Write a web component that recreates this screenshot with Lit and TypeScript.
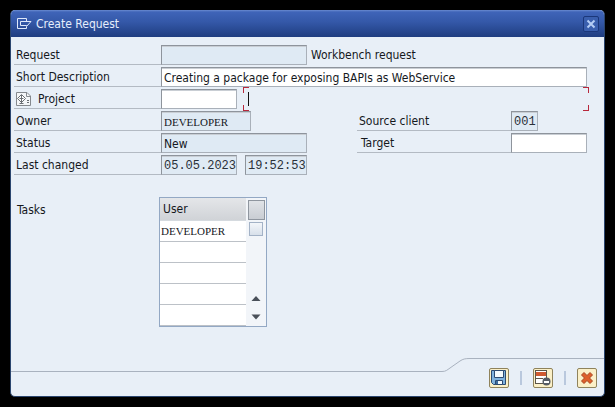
import { LitElement, html, css } from "lit";
import { customElement } from "lit/decorators.js";

const variantIcon = html`<svg class="proj" width="16" height="14" viewBox="0 0 16 14" aria-hidden="true">
  <path d="M.5 .5H11L14.500 4V13.500H.5Z" fill="#f4f6f8" stroke="#85898e"/>
  <path d="M10.500 .5V4.500H14.500" fill="none" stroke="#85898e"/>
  <path d="M5.500 2.500L9.500 6.500L5.500 10.500L1.500 6.500Z" fill="#fff" stroke="#6a6e73"/>
  <path d="M5.500 3V12M3.500 6.500H7.500M3.500 11.500H7.500M11 8.500H13M11 10.500H13" fill="none" stroke="#6a6e73"/>
</svg>`;

const dialogIcon = html`<svg width="15" height="12" viewBox="0 0 15 12" aria-hidden="true">
  <path d="M9.500 3V.5H.5V10.500H9.500V9" fill="none" stroke="#dfe8fa"/>
  <path d="M3.500 3.500H14L9.500 8.500V7.500H3.500Z" fill="none" stroke="#dfe8fa"/>
</svg>`;

const saveIcon = html`<svg width="18" height="18" viewBox="0 0 18 18" aria-hidden="true">
  <path d="M1.500 1.500H15.500V15.500H3.500L1.500 13.500Z" fill="#7fb2de" stroke="#2c4a70"/>
  <path d="M4.500 1.500H13.500V8.500H4.500Z" fill="#f4fafd" stroke="#2c4a70"/>
  <path d="M5.500 15.500V11.500H12.500V15.500Z" fill="#f4fafd" stroke="#2c4a70"/>
  <path d="M6 12H8V15H6Z" fill="#3d6c9e"/>
</svg>`;

const removeIcon = html`<svg width="18" height="18" viewBox="0 0 18 18" aria-hidden="true">
  <path d="M1 1H13V15H1Z" fill="#fff"/>
  <path d="M1 1.500H13M1.500 1V15M1 9.500H9M1 14.500H9M12.500 1V9" fill="none" stroke="#5c5648"/>
  <path d="M2 3H12V7H2Z" fill="#cf5a30"/>
  <circle cx="12.500" cy="12.500" r="4" fill="#565c65"/>
  <path d="M10 12H15V14H10Z" fill="#fff"/>
</svg>`;

const cancelIcon = html`<svg width="18" height="18" viewBox="0 0 18 18" aria-hidden="true">
  <path d="M3.500 6L6 3.500L9 6.500L12 3.500L14.500 6L11.500 9L14.500 12L12 14.500L9 11.500L6 14.500L3.500 12L6.500 9Z"
    fill="#de5f2a" stroke="#a84420"/>
</svg>`;

@customElement("app-root")
export class AppRoot extends LitElement {
  static styles = css`
    * { box-sizing: border-box; }
    :host {
      display: flex;
      min-height: 100vh;
      padding: 10px;
      box-sizing: border-box;
      background: #000;
      color: #15181d;
      font: 12px/20px "DejaVu Sans Condensed", "Noto Sans", sans-serif;
    }
    .dialog {
      flex: 1;
      display: flex;
      flex-direction: column;
      border: 1px solid #2b466f;
      border-top: 0;
      border-radius: 5px;
      overflow: hidden;
      background: #e8eff7;
    }
    .title {
      display: flex;
      align-items: center;
      gap: 4px;
      height: 27px;
      padding: 0 5px 0 6px;
      color: #e6eefc;
      background: linear-gradient(#6a8bd0 0, #3f64b8 2px, #3458a8 12px, #1f3d80 100%);
    }
    h1 { flex: 1; margin: 0; font: inherit; }
    button { padding: 0; font: inherit; }
    .close {
      display: grid;
      place-items: center;
      width: 16px;
      height: 16px;
      border: 1px solid #1b377a;
      border-radius: 2px;
      background: #3a5fae;
    }
    form { flex: 1; padding: 8px 17px 12px 3px; }
    .rows { display: grid; gap: 2px; }
    .row { display: flex; height: 20px; }
    .label {
      display: flex;
      align-items: center;
      gap: 6px;
      flex: none;
      width: 147px;
      padding-left: 2px;
      border-bottom: 1px solid #b3bac3;
      white-space: nowrap;
    }
    .proj { flex: none; }
    input {
      min-width: 0;
      height: 20px;
      margin: 0;
      padding: 1px 0 0 2px;
      border: 1px solid #a9b0b9;
      border-top-color: #8e949c;
      border-left-color: #8e949c;
      border-radius: 0;
      outline: 0;
      color: inherit;
      background: #fff;
      box-shadow: inset 0 1px 0 #c9ced4;
      font: inherit;
    }
    input:read-only { background: #dfeaf4; }
    .mono { font-family: "Liberation Mono", monospace; color: #2a3038; }
    .name { font: 11px/20px "Liberation Serif", serif; }
    .w146 { width: 146px; }
    .w90 { width: 90px; }
    .w76 { width: 76px; }
    .w62 { width: 62px; }
    .w27 { width: 27px; }
    .fill { flex: 1; }
    .hint { padding-left: 4px; }
    .gap { margin-left: 8px; }
    .right { display: flex; width: 230px; margin-left: auto; }
    .right .label { width: 154px; }
    .right .indent { padding-left: 4px; }
    .focus {
      --r: linear-gradient(#b8283c, #b8283c);
      flex: 1;
      display: flex;
      align-items: center;
      height: 24px;
      margin: -2px -2px 0 6px;
      padding-left: 5px;
      background:
        var(--r) 0 0 / 6px 1px, var(--r) 0 0 / 1px 6px,
        var(--r) 100% 0 / 6px 1px, var(--r) 100% 0 / 1px 6px,
        var(--r) 0 100% / 6px 1px, var(--r) 0 100% / 1px 6px,
        var(--r) 100% 100% / 6px 1px, var(--r) 100% 100% / 1px 6px;
      background-repeat: no-repeat;
    }
    .caret { width: 1px; height: 14px; background: #111; }
    .tasks { display: flex; margin-top: 22px; }
    .tasks h2 { width: 145px; margin: 0; padding: 3px 0 0 3px; font: inherit; }
    .list { display: flex; border: 1px solid #93a8c4; background: #fff; }
    table { width: 86px; border-collapse: separate; border-spacing: 0; table-layout: fixed; }
    th, td {
      height: 21px;
      padding: 0 0 0 2px;
      border-bottom: 1px solid #bcc1c7;
      text-align: left;
      font-weight: normal;
      white-space: nowrap;
    }
    td { padding-left: 1px; }
    th { height: 23px; border-color: #d5dadf; background: linear-gradient(#e4e6e9, #d0d3d7); padding-left: 3px; }
    .scroll { display: flex; flex-direction: column; align-items: center; width: 20px; background: #f2f5f9; }
    .cfg { width: 17px; height: 20px; margin-top: 2px; border: 1px solid #8f969f; background: linear-gradient(#e0e3e7, #c9cdd3); }
    .thumb { width: 14px; height: 14px; margin-top: 2px; border: 1px solid #a3b2c6; background: linear-gradient(#f3f6fa, #d8e0ea); }
    .arrow { width: 14px; height: 18px; border: 0; background: none; line-height: 0; }
    .up { margin-top: auto; }
    footer { display: flex; height: 38px; }
    .line { flex: 1; margin-top: 13px; border-top: 1px solid #a9b2bf; }
    .actions {
      display: flex;
      align-items: center;
      justify-content: flex-end;
      gap: 11px;
      padding-right: 7px;
      width: 134px;
      border-top: 1px solid #a9b2bf;
    }
    .actions button {
      display: grid;
      place-items: center;
      width: 20px;
      height: 20px;
      border: 1px solid #8f835c;
      border-radius: 2px;
      background: #fbf0c8;
    }
    .sep { width: 2px; height: 14px; background: #b9c8dd; }
  `;

  render() {
    return html`
      <section class="dialog" role="dialog" aria-labelledby="title">
        <header class="title">
          ${dialogIcon}
          <h1 id="title">Create Request</h1>
          <button class="close" aria-label="Close">
            <svg width="10" height="10" viewBox="0 0 10 10"><path d="M1.500 1.500L8.500 8.500M8.500 1.500L1.500 8.500" stroke="#b5cdf5" stroke-width="2"/></svg>
          </button>
        </header>
        <form>
          <div class="rows">
            <div class="row">
              <label class="label" for="req">Request</label>
              <input id="req" class="w146" readonly />
              <span class="hint">Workbench request</span>
            </div>
            <div class="row">
              <label class="label" for="desc">Short Description</label>
              <input id="desc" class="fill" value="Creating a package for exposing BAPIs as WebService" />
            </div>
            <div class="row">
              <label class="label" for="project">${variantIcon}Project</label>
              <input id="project" class="w76" />
              <div class="focus"><span class="caret"></span></div>
            </div>
            <div class="row">
              <label class="label" for="owner">Owner</label>
              <input id="owner" class="w90 name" readonly value="DEVELOPER" />
              <div class="right">
                <label class="label" for="client">Source client</label>
                <input id="client" class="w27 mono" readonly value="001" />
              </div>
            </div>
            <div class="row">
              <label class="label" for="status">Status</label>
              <input id="status" class="w146" readonly value="New" />
              <div class="right">
                <label class="label indent" for="target">Target</label>
                <input id="target" class="w76" />
              </div>
            </div>
            <div class="row">
              <label class="label" for="date">Last changed</label>
              <input id="date" class="w76 mono" readonly value="05.05.2023" />
              <input class="w62 mono gap" aria-label="Time of last change" readonly value="19:52:53" />
            </div>
          </div>
          <div class="tasks">
            <h2>Tasks</h2>
            <div class="list">
              <table>
                <thead><tr><th>User</th></tr></thead>
                <tbody>
                  ${["DEVELOPER", "", "", "", ""].map((u) => html`<tr><td class="name">${u}</td></tr>`)}
                </tbody>
              </table>
              <div class="scroll">
                <button type="button" class="cfg" aria-label="Table settings"></button>
                <div class="thumb"></div>
                <button type="button" class="arrow up" aria-label="Scroll up">
                  <svg width="10" height="6" viewBox="0 0 10 6"><path d="M5 0L9.500 5H.5Z" fill="#4a5059"/></svg>
                </button>
                <button type="button" class="arrow" aria-label="Scroll down">
                  <svg width="10" height="6" viewBox="0 0 10 6"><path d="M5 5.500L.5 .5H9.500Z" fill="#4a5059"/></svg>
                </button>
              </div>
            </div>
          </div>
        </form>
        <footer>
          <div class="line"></div>
          <svg width="28" height="14" viewBox="0 0 28 14"><path d="M0 13.500C4 13.500 5 12 8 10L18 3C21 1 23 .5 28 .5" fill="none" stroke="#a9b2bf"/></svg>
          <div class="actions">
            <button aria-label="Save">${saveIcon}</button>
            <span class="sep"></span>
            <button aria-label="Remove entry">${removeIcon}</button>
            <span class="sep"></span>
            <button aria-label="Cancel">${cancelIcon}</button>
          </div>
        </footer>
      </section>
    `;
  }
}
